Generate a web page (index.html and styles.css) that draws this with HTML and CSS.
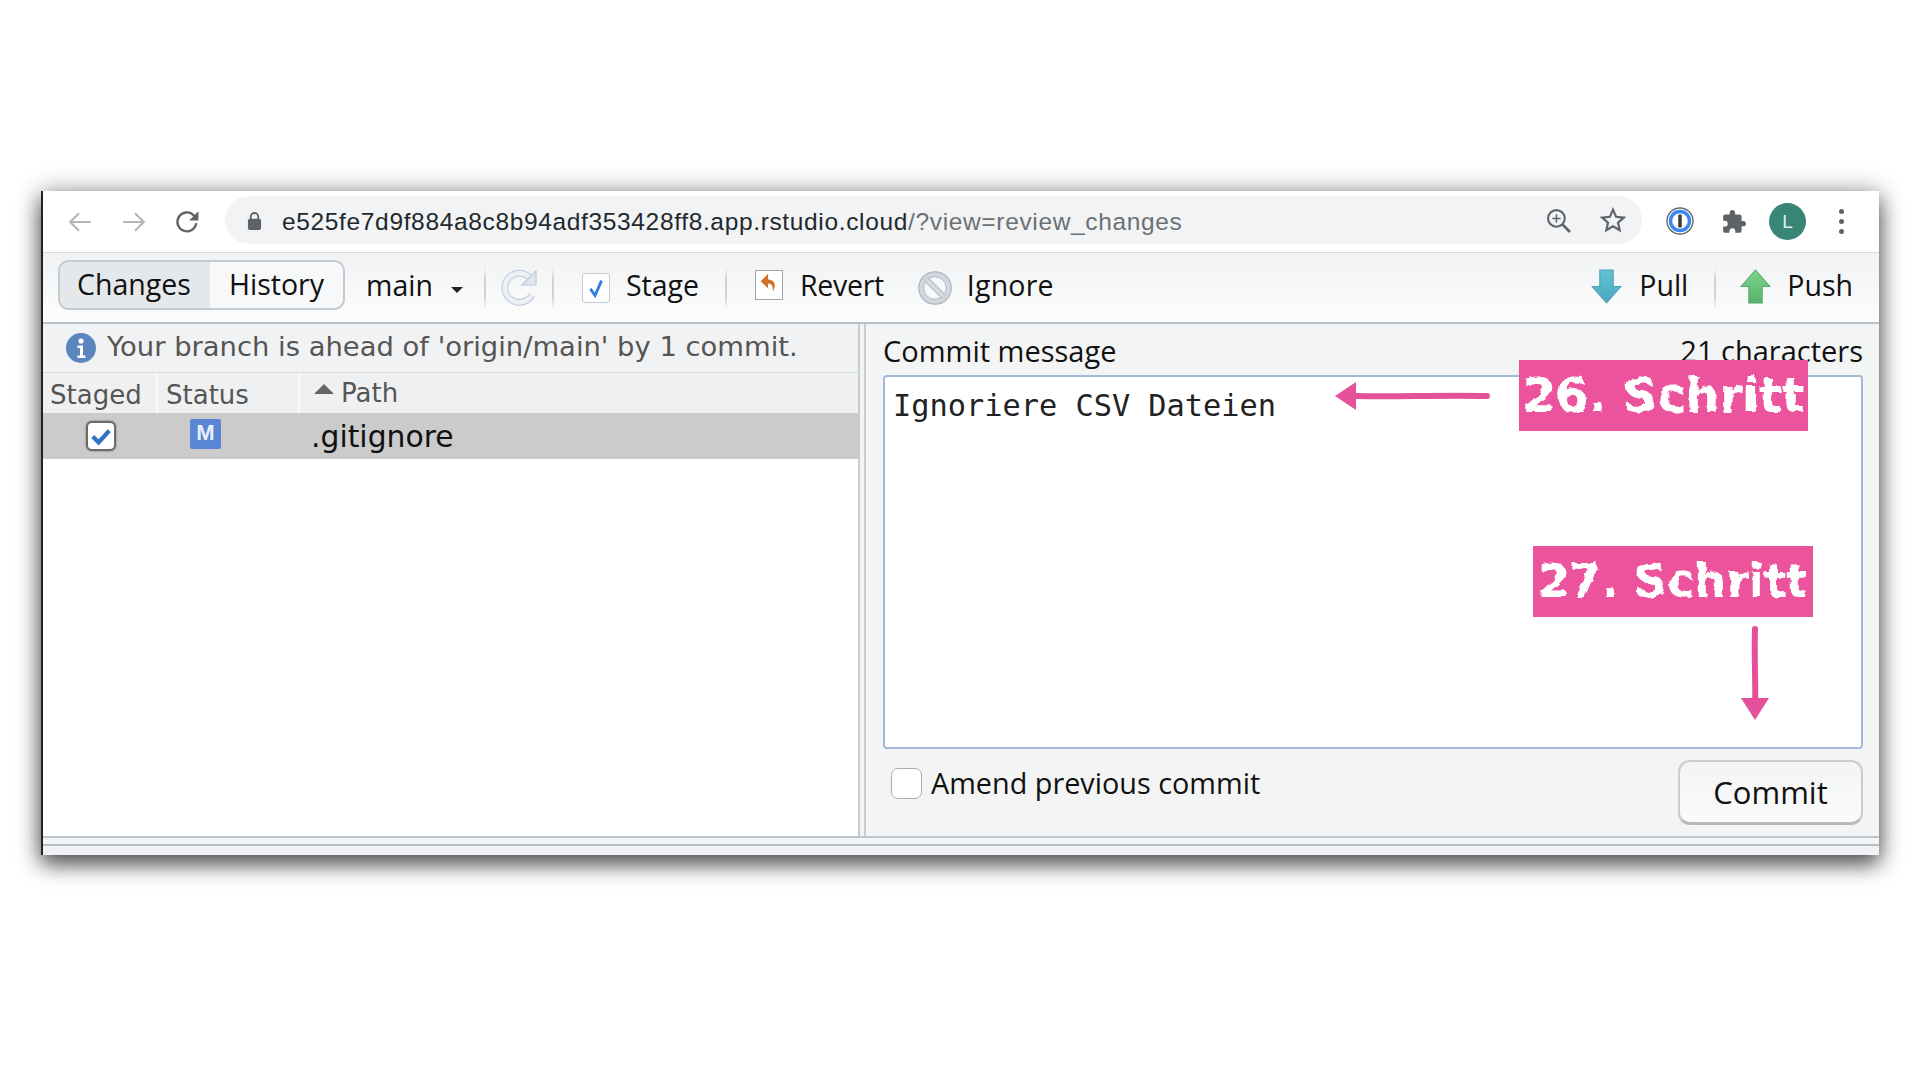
FILE: index.html
```html
<!DOCTYPE html>
<html>
<head>
<meta charset="utf-8"/>
<title>Review Changes</title>
<link rel="stylesheet" href="styles.css">
</head>
<body>
<div class="window">

  <div class="browser">
    <svg class="nav nav-back" viewBox="0 0 24 24"><path d="M22 12H3M11 4l-8 8 8 8" fill="none" stroke="#b4b7ba" stroke-width="2"/></svg>
    <svg class="nav nav-forward" viewBox="0 0 24 24"><path d="M2 12h19M13 4l8 8-8 8" fill="none" stroke="#b4b7ba" stroke-width="2"/></svg>
    <svg class="nav nav-reload" viewBox="0 0 24 24"><path d="M20.5 13a8.7 8.7 0 1 1-2.4-7.2L21 8.5" fill="none" stroke="#5f6368" stroke-width="2.2"/><path d="M22.5 2v8.5H14z" fill="#5f6368"/></svg>
    <div class="omnibox">
      <svg class="lock" viewBox="0 0 16 20"><path d="M4 9V6a4 4 0 0 1 8 0v3" fill="none" stroke="#5f6368" stroke-width="2"/><rect x="1" y="8" width="14" height="12" rx="2" fill="#5f6368"/></svg>
      <span class="url">e525fe7d9f884a8c8b94adf353428ff8.app.rstudio.cloud<span class="url-rest">/?view=review_changes</span></span>
      <svg class="omni-zoom" viewBox="0 0 24 24"><circle cx="10" cy="10" r="8" fill="none" stroke="#5f6368" stroke-width="2"/><path d="M16 16l7 7" stroke="#5f6368" stroke-width="2.6"/><path d="M6 10h8M10 6v8" stroke="#5f6368" stroke-width="1.5"/></svg>
      <svg class="omni-star" viewBox="0 0 24 24"><path d="M12 2.5l2.9 6.6 7.1.7-5.4 4.7 1.6 7-6.2-3.7-6.2 3.7 1.6-7L2 9.8l7.1-.7z" fill="none" stroke="#5f6368" stroke-width="2"/></svg>
    </div>
    <svg class="ext-onepass" viewBox="0 0 28 28"><circle cx="14" cy="14" r="13" fill="#fff" stroke="#66696d" stroke-width="1.4"/><circle cx="14" cy="14" r="9.5" fill="#fff" stroke="#3b86f2" stroke-width="3.4"/><rect x="12.2" y="7.5" width="3.6" height="13" rx="1" fill="#3c4043"/></svg>
    <svg class="ext-puzzle" viewBox="0 0 24 24"><path d="M20.5 11H19V7a2 2 0 0 0-2-2h-4V3.5a2.5 2.5 0 0 0-5 0V5H4a2 2 0 0 0-2 2v3.8h1.5a2.7 2.7 0 0 1 0 5.4H2V20a2 2 0 0 0 2 2h3.8v-1.5a2.7 2.7 0 0 1 5.4 0V22H17a2 2 0 0 0 2-2v-4h1.5a2.5 2.5 0 0 0 0-5z" fill="#5f6368"/></svg>
    <div class="avatar">L</div>
    <div class="kebab"><i></i><i></i><i></i></div>
  </div>

  <div class="toolbar">
    <div class="tabs">
      <div class="tab tab-on">Changes</div>
      <div class="tab">History</div>
    </div>
    <span class="tool branch">main</span>
    <span class="caret"></span>
    <span class="sep sep-a"></span>
    <svg class="ic-refresh" viewBox="0 0 38 40"><path d="M31 27a14.500 14.500 0 1 1-2-17" fill="none" stroke="#c6d0dc" stroke-width="7"/><path d="M31 27a14.500 14.500 0 1 1-2-17" fill="none" stroke="#edf1f7" stroke-width="4.500"/><path d="M35 3v14H21z" fill="#dfe6ef" stroke="#bfcad8" stroke-width="1.2"/></svg>
    <span class="sep sep-b"></span>
    <span class="ic-stage"><svg viewBox="0 0 28 30"><path d="M8 16l5 7 7-16" fill="none" stroke="#2f7de1" stroke-width="3"/></svg></span>
    <span class="tool stage">Stage</span>
    <span class="sep sep-c"></span>
    <span class="ic-revert"><svg viewBox="0 0 28 30"><path d="M13 3L5 11l8 7.500v-5c3 0 5.500 1.500 5 8.500 3.500-5 3.500-12.500-5-13z" fill="#d2702a"/></svg></span>
    <span class="tool revert">Revert</span>
    <svg class="ic-ignore" viewBox="0 0 34 34"><circle cx="17" cy="17" r="14" fill="none" stroke="#d3d8df" stroke-width="5"/><circle cx="17" cy="17" r="16.200" fill="none" stroke="#aeb6c0" stroke-width="1.200"/><circle cx="17" cy="17" r="11.300" fill="none" stroke="#aeb6c0" stroke-width="1"/><path d="M8 8l18 18" stroke="#aeb6c0" stroke-width="6"/><path d="M8 8l18 18" stroke="#d3d8df" stroke-width="4"/></svg>
    <span class="tool ignore">Ignore</span>
    <svg class="ic-pull" viewBox="0 0 30 34"><defs><linearGradient id="pullfill" x1="0" y1="0" x2="0" y2="1"><stop offset="0" stop-color="#5fc4d2"/><stop offset="1" stop-color="#4ba6c0"/></linearGradient></defs><path d="M8.500 1h13v16H29L15 33 1 17h7.500z" fill="url(#pullfill)" stroke="#4f9fb6"/></svg>
    <span class="tool pull">Pull</span>
    <span class="sep sep-d"></span>
    <svg class="ic-push" viewBox="0 0 30 34"><defs><linearGradient id="pushfill" x1="0" y1="0" x2="0" y2="1"><stop offset="0" stop-color="#7ed58b"/><stop offset="1" stop-color="#56b26c"/></linearGradient></defs><path d="M15 1l14 16h-7.500v16h-13V17H1z" fill="url(#pushfill)" stroke="#54a868"/></svg>
    <span class="tool push">Push</span>
  </div>

  <div class="panes">
    <div class="files">
      <div class="notice">
        <svg class="ic-info" viewBox="0 0 30 30"><circle cx="15" cy="15" r="15" fill="#5b86bd"/><circle cx="15" cy="8" r="2.600" fill="#fff"/><path d="M11.500 12.500h5.500v10h2.500v2.500h-8v-2.500h2.500v-7.500h-2.500z" fill="#fff"/></svg>
        <span class="notice-text">Your branch is ahead of 'origin/main' by 1 commit.</span>
      </div>
      <div class="thead">
        <div class="th th-staged">Staged</div>
        <div class="th th-status">Status</div>
        <div class="th th-path"><span class="sort"></span>Path</div>
      </div>
      <div class="row">
        <div class="td-staged"><span class="rowcheck"><svg viewBox="0 0 22 22"><path d="M4 11.500l5 5 9-10" fill="none" stroke="#2f72c4" stroke-width="3.600"/></svg></span></div>
        <div class="td-status"><span class="badge">M</span></div>
        <div class="td-path">.gitignore</div>
      </div>
    </div>
    <div class="splitter"></div>
    <div class="commit">
      <div class="commit-head">
        <span>Commit message</span>
        <span>21 characters</span>
      </div>
      <div class="message">Ignoriere CSV Dateien</div>
      <div class="commit-foot">
        <label class="amend"><span class="amend-box"></span>Amend previous commit</label>
        <div class="commit-btn">Commit</div>
      </div>
    </div>
  </div>

  <div class="statusbar"></div>
</div>

<svg class="filters" width="0" height="0"><filter id="rough" x="-5%" y="-5%" width="110%" height="110%"><feTurbulence type="fractalNoise" baseFrequency="0.09" numOctaves="3" seed="4"/><feDisplacementMap in="SourceGraphic" scale="6"/></filter></svg>
<div class="step step-26"><span>26. Schritt</span></div>
<div class="step step-27"><span>27. Schritt</span></div>
<svg class="arrow arrow-left" viewBox="0 0 158 32"><path d="M22 16c40 1 80-1 131 0" fill="none" stroke="#e4519a" stroke-width="6" stroke-linecap="round"/><path d="M1 16L22 2v28z" fill="#e4519a"/></svg>
<svg class="arrow arrow-down" viewBox="0 0 32 97"><path d="M16 5c-1 30 1 60 0 76" fill="none" stroke="#e4519a" stroke-width="6" stroke-linecap="round"/><path d="M2 74h28L16 96z" fill="#e4519a"/></svg>
</body>
</html>
```

FILE: styles.css
```css
body {
   margin: 0;
   background-color: white;
   height: 1080px;
   overflow: hidden;
   font-family: "Open Sans", sans-serif;
   color: #111;
}

.window {
   position: absolute;
   left: 41px;
   top: 191px;
   width: 1836px;
   height: 664px;
   border-left: 2px solid #222;
   background: white;
   box-shadow: 0 10px 20px rgba(0,0,0,0.6), 0 0 24px rgba(0,0,0,0.3);
   display: flex;
   flex-direction: column;
}

/* browser bar */
.browser {
   height: 61px;
   flex: none;
   display: flex;
   align-items: center;
   border-bottom: 1px solid #d5d8dc;
   background: white;
}

.nav {
   width: 26px;
   height: 26px;
   flex: none;
}

.nav-back { margin-left: 24px; }
.nav-forward { margin-left: 28px; }
.nav-reload { margin-left: 27px; }

.omnibox {
   margin-left: 25px;
   width: 1417px;
   height: 48px;
   border-radius: 24px;
   background: #f1f3f4;
   display: flex;
   align-items: center;
   margin-top: -3px;
}

.lock {
   width: 15px;
   height: 19px;
   margin-left: 22px;
   flex: none;
}

.url {
   margin-left: 20px;
   margin-top: 3px;
   font-family: "Liberation Sans", sans-serif;
   font-size: 24.5px;
   letter-spacing: 0.65px;
   color: #24282c;
   white-space: nowrap;
}

.url-rest { color: #6c7075; }

.omni-zoom {
   width: 25px;
   height: 25px;
   margin-left: auto;
   flex: none;
}

.omni-star {
   width: 26px;
   height: 26px;
   margin-left: 29px;
   margin-right: 16px;
   flex: none;
}

.ext-onepass {
   width: 28px;
   height: 28px;
   margin-left: 24px;
   margin-top: -1px;
   flex: none;
}

.ext-puzzle {
   width: 26px;
   height: 26px;
   margin-left: 27px;
   flex: none;
}

.avatar {
   width: 37px;
   height: 37px;
   margin-left: 22px;
   border-radius: 50%;
   background: #3a8676;
   color: #dff0ea;
   font-family: "Liberation Sans", sans-serif;
   font-size: 19px;
   line-height: 37px;
   text-align: center;
   flex: none;
}

.kebab {
   margin-left: 33px;
   width: 6px;
   display: flex;
   flex-direction: column;
   gap: 5px;
}

.kebab i {
   display: block;
   width: 5px;
   height: 5px;
   border-radius: 50%;
   background: #5f6368;
}

/* rstudio toolbar */
.toolbar {
   height: 71px;
   flex: none;
   display: flex;
   align-items: center;
   background: linear-gradient(#f0f2f3, #fdfdfd);
   border-bottom: 2px solid #b8c0c9;
   box-sizing: border-box;
   font-size: 28.5px;
}

.tabs {
   margin-left: 15px;
   width: 287px;
   height: 50px;
   box-sizing: border-box;
   border: 2px solid #c5cad0;
   border-radius: 11px;
   display: flex;
   overflow: hidden;
   margin-top: -5px;
   flex: none;
}

.tab {
   line-height: 45px;
   text-align: center;
   flex: 1;
   background: #f7f8f9;
}

.tab-on {
   flex: none;
   width: 148px;
   padding-right: 2px;
   background: #e5e8eb;
}

.tool { flex: none; line-height: 1; margin-top: -4px; }
.branch { margin-left: 21px; }

.caret {
   margin-left: 18px;
   margin-top: 5px;
   border-left: 6px solid transparent;
   border-right: 6px solid transparent;
   border-top: 6px solid #222;
   flex: none;
}

.sep {
   width: 2px;
   height: 42px;
   background: linear-gradient(rgba(200,205,210,0), #cdd2d7 30%, #cdd2d7 70%, rgba(200,205,210,0));
   flex: none;
}

.sep-a { margin-left: 21px; }
.sep-b { margin-left: 13px; }
.sep-c { margin-left: 26px; }
.sep-d { margin-left: 26px; }

.ic-refresh {
   width: 38px;
   height: 40px;
   margin-left: 15px;
   flex: none;
}

.ic-stage, .ic-revert {
   width: 28px;
   height: 30px;
   box-sizing: border-box;
   border: 1px solid #c4cad2;
   background: white;
   display: block;
   flex: none;
}

.ic-stage { margin-left: 28px; border-radius: 3px; }
.ic-stage svg, .ic-revert svg { display: block; width: 26px; height: 28px; }
.stage { margin-left: 16px; }
.ic-revert { margin-left: 28px; border-color: #9ea4ac; margin-top: -6px; }
.revert { margin-left: 17px; letter-spacing: -0.3px; }

.ic-ignore {
   width: 34px;
   height: 34px;
   margin-left: 34px;
   flex: none;
}

.ignore { margin-left: 15px; letter-spacing: 0.2px; }

.ic-pull, .ic-push {
   width: 31px;
   height: 35px;
   flex: none;
   margin-top: -3px;
}

.ic-pull { margin-left: auto; }
.pull { margin-left: 17px; }
.ic-push { margin-left: 24px; }
.push { margin-left: 16px; margin-right: 26px; }

/* panes */
.panes {
   flex: 1;
   display: flex;
   min-height: 0;
}

.files {
   width: 815px;
   flex: none;
   background: white;
   font-family: "DejaVu Sans", sans-serif;
}

.notice {
   height: 48px;
   background: #f1f2f3;
   border-bottom: 1px solid #d9dcdf;
   display: flex;
   align-items: center;
   gap: 11px;
   padding-left: 23px;
   color: #555;
   font-size: 27.4px;
   white-space: nowrap;
}

.notice-text { margin-top: -3px; }
.ic-info { width: 30px; height: 30px; flex: none; }

.thead {
   height: 40px;
   display: flex;
   background: #eff0f1;
   color: #555;
   font-size: 26px;
   line-height: 44px;
}

.th {
   box-sizing: border-box;
   border-right: 2px solid #fafafa;
   white-space: nowrap;
}

.th-staged { width: 115px; padding-left: 7px; }
.th-status { width: 142px; padding-left: 8px; }
.th-path { padding-left: 14px; border: none; display: flex; align-items: center; }

.sort {
   border-left: 10px solid transparent;
   border-right: 10px solid transparent;
   border-bottom: 10px solid #666;
   margin-right: 7px;
   margin-top: -8px;
}

.row {
   height: 46px;
   display: flex;
   align-items: center;
   background: #cbcbcb;
}

.td-staged { width: 115px; display: flex; padding-left: 43px; box-sizing: border-box; }
.td-status { width: 142px; display: flex; padding-left: 32px; box-sizing: border-box; margin-top: -4px; }
.td-path { padding-left: 11px; font-size: 29.8px; color: #111; }

.rowcheck {
   width: 30px;
   height: 30px;
   box-sizing: border-box;
   border: 2px solid #6b6b6b;
   border-radius: 6px;
   background: white;
   box-shadow: 0 0 2px rgba(0,0,0,0.5);
   display: block;
}

.rowcheck svg { width: 26px; height: 26px; display: block; }

.badge {
   width: 31px;
   height: 30px;
   border-radius: 2px;
   background: #5b86d6;
   color: #e9f0fb;
   font-family: "Liberation Sans", sans-serif;
   font-weight: bold;
   font-size: 22px;
   line-height: 28px;
   text-align: center;
   display: block;
}

.splitter {
   width: 8px;
   flex: none;
   box-sizing: border-box;
   background: #f3f4f4;
   border-left: 2px solid #c6ccd2;
   border-right: 2px solid #c6ccd2;
}

.commit {
   flex: 1;
   background: #f3f4f4;
   display: flex;
   flex-direction: column;
   padding: 0 16px 0 17px;
   font-size: 29px;
}

.commit-head {
   height: 51px;
   flex: none;
   display: flex;
   justify-content: space-between;
   align-items: flex-end;
   line-height: 49px;
}

.message {
   height: 374px;
   flex: none;
   box-sizing: border-box;
   background: white;
   border: 2px solid #a3b8dc;
   border-radius: 4px;
   padding: 11px 8px;
   font-family: "DejaVu Sans Mono", monospace;
   font-size: 30.3px;
   line-height: 36px;
   color: #222;
}

.commit-foot {
   display: flex;
   justify-content: space-between;
   align-items: flex-start;
   padding-top: 11px;
}

.amend {
   display: flex;
   align-items: center;
   gap: 9px;
   padding-left: 8px;
   margin-top: 3px;
   line-height: 40px;
   font-size: 28.8px;
}

.amend-box {
   width: 31px;
   height: 31px;
   box-sizing: border-box;
   background: white;
   border: 1px solid #a8adb3;
   border-radius: 7px;
   flex: none;
}

.commit-btn {
   width: 185px;
   height: 65px;
   box-sizing: border-box;
   border: 2px solid #c9cdd1;
   border-bottom: 3px solid #b5b9bd;
   border-radius: 12px;
   background: linear-gradient(#f3f4f4, #fbfbfb);
   text-align: center;
   line-height: 60px;
   font-size: 31px;
}

.statusbar {
   height: 19px;
   flex: none;
   box-sizing: border-box;
   background: #f0f2f5;
   border-top: 2px solid #bcc5ce;
   box-shadow: inset 0 6px 0 #f3f5f7, inset 0 8px 0 #b6bfc9;
}

/* annotations drawn over the screenshot */
.filters { position: absolute; }

.step {
   position: absolute;
   height: 71px;
   background: #ec539d;
   color: white;
   font-family: "DejaVu Sans", sans-serif;
   font-weight: bold;
   line-height: 71px;
   text-align: center;
   white-space: nowrap;
}

.step span {
   display: block;
   filter: url(#rough);
}

.step-26 { left: 1519px; top: 360px; width: 289px; font-size: 47.5px; }
.step-27 { left: 1533px; top: 546px; width: 280px; font-size: 45.5px; }

.arrow { position: absolute; }
.arrow-left { left: 1334px; top: 380px; width: 158px; height: 32px; }
.arrow-down { left: 1739px; top: 624px; width: 32px; height: 97px; }
```
